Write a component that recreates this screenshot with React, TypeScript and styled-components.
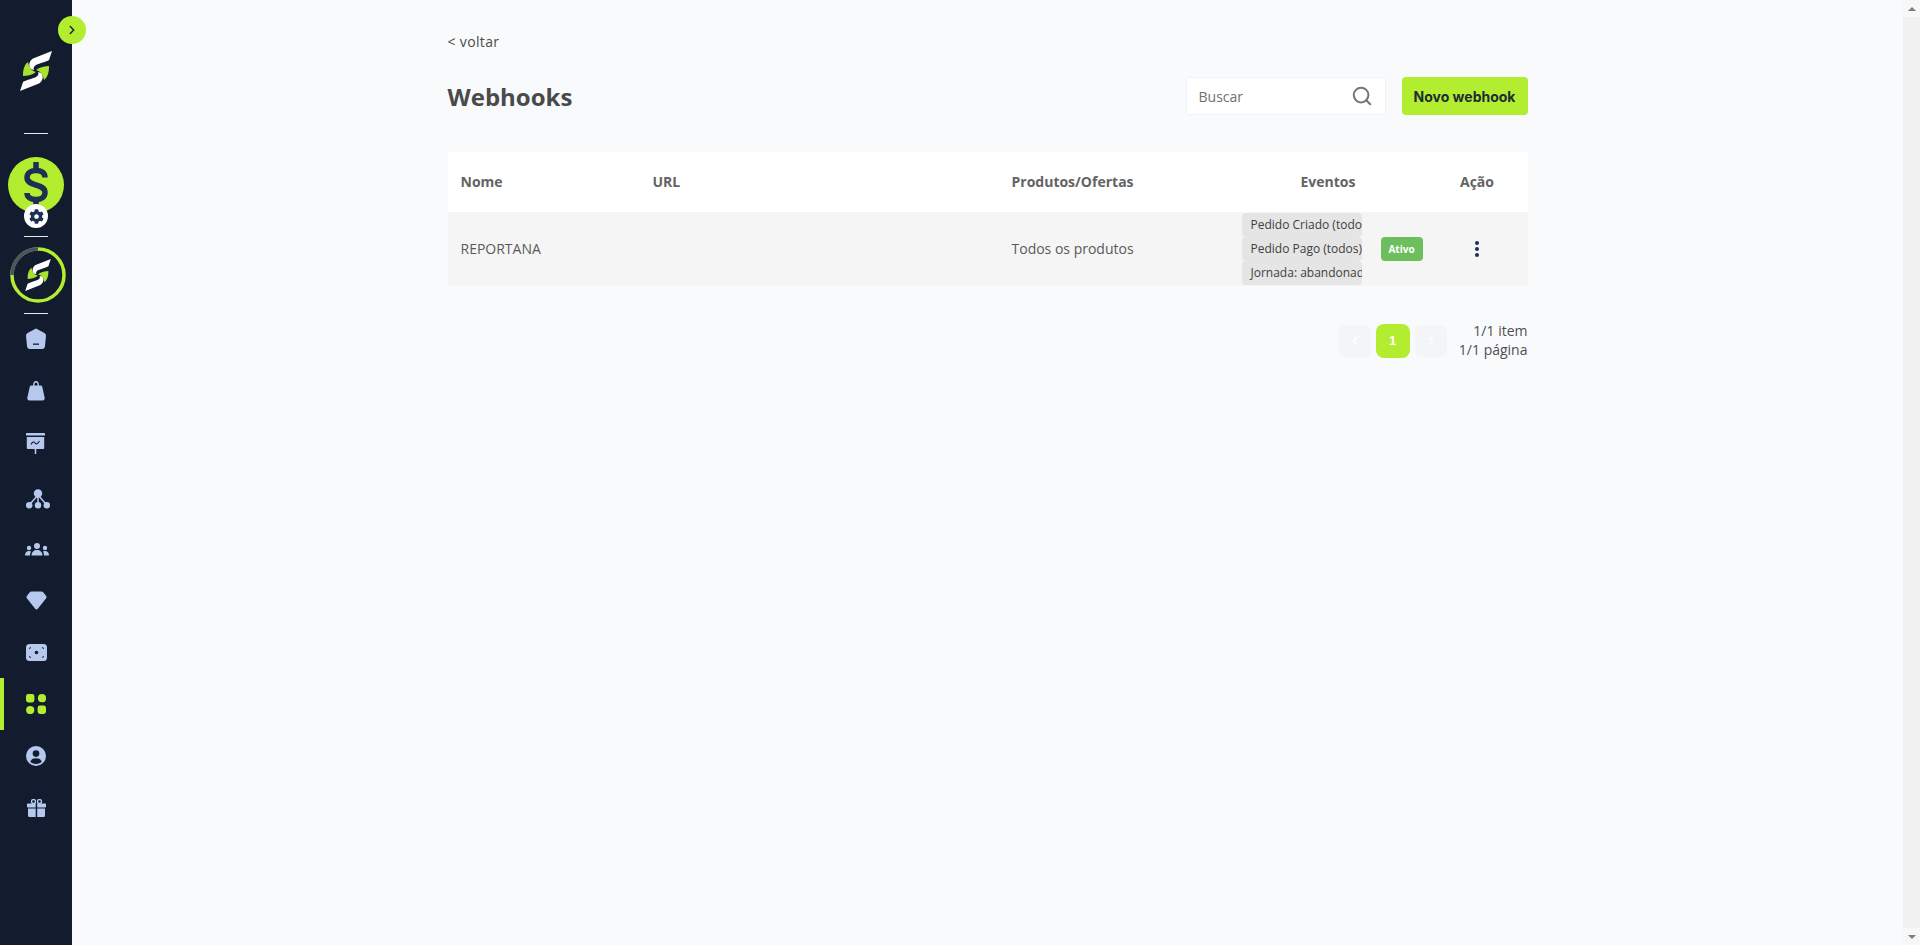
import React from "react";
import styled, { createGlobalStyle } from "styled-components";
import { ChevronLeft, ChevronRight, Search } from "lucide-react";
import { FaCog } from "react-icons/fa";

const GlobalStyle = createGlobalStyle`
  html, body {
    margin: 0;
    padding: 0;
    height: 100%;
    overflow: hidden;
    background: #f9fafc;
  }
  #root {
    height: 100%;
  }
  * {
    box-sizing: border-box;
  }
`;

const Page = styled.div`
  display: flex;
  height: 945px;
  font-family: "Open Sans", "Liberation Sans", sans-serif;
  color: #4a4a4a;
`;

const Sidebar = styled.nav`
  position: relative;
  flex: 0 0 72px;
  display: flex;
  flex-direction: column;
  align-items: center;
  padding-top: 51px;
  background: #121c2e;
`;

const Toggle = styled.button`
  position: absolute;
  top: 16px;
  right: -14px;
  z-index: 2;
  display: flex;
  align-items: center;
  justify-content: center;
  width: 28px;
  height: 28px;
  padding: 0;
  border: none;
  border-radius: 50%;
  background: #b2ee2f;
  color: #16233a;
`;

const Logo = styled.svg`
  display: block;
  flex: none;
`;

const Divider = styled.hr<{ $top: number }>`
  flex: none;
  width: 24px;
  height: 1px;
  margin: ${(p) => p.$top}px 0 0;
  border: none;
  background: #e8ebf0;
`;

const Balance = styled.div`
  position: relative;
  flex: none;
  width: 56px;
  height: 56px;
  margin-top: 23px;
  border-radius: 50%;
  background: #b2ee2f;
`;

const GearBadge = styled.span`
  position: absolute;
  left: 16px;
  top: 47px;
  display: flex;
  align-items: center;
  justify-content: center;
  width: 24px;
  height: 24px;
  border-radius: 50%;
  background: #ffffff;
  color: #1d2f52;
`;

const Ring = styled.div`
  position: relative;
  flex: none;
  display: flex;
  align-items: center;
  justify-content: center;
  width: 56px;
  height: 56px;
  margin: 10px 0 0 4px;
`;

const RingTrack = styled.svg`
  position: absolute;
  inset: 0;
`;

const NavList = styled.ul`
  flex: none;
  align-self: stretch;
  margin: 0;
  padding: 0;
  list-style: none;
`;

const NavItem = styled.li<{ $active?: boolean; $shift: number }>`
  display: flex;
  align-items: center;
  justify-content: center;
  height: 52px;
  border-left: 4px solid ${(p) => (p.$active ? "#b2ee2f" : "transparent")};
  padding-right: 4px;
  color: ${(p) => (p.$active ? "#b2ee2f" : "#b6c8ee")};

  svg {
    margin-top: ${(p) => p.$shift}px;
  }
`;

const Main = styled.main`
  flex: 1;
  display: flex;
  justify-content: center;
  min-width: 0;
  background: #f9fafc;
`;

const Content = styled.div`
  width: 1080px;
  padding-top: 32px;
`;

const BackLink = styled.a`
  display: block;
  font-size: 14px;
  line-height: 19px;
  letter-spacing: 0.35px;
  color: #4a4a4a;
`;

const TitleRow = styled.header`
  display: flex;
  align-items: center;
  height: 38px;
  margin-top: 26px;
`;

const Title = styled.h1`
  flex: 1;
  margin: 0;
  padding-top: 1px;
  font-size: 24px;
  line-height: 38px;
  font-weight: 700;
  color: #4a4a4a;
`;

const SearchBox = styled.label`
  display: flex;
  align-items: center;
  justify-content: space-between;
  width: 200px;
  height: 38px;
  padding: 0 12px 0 12px;
  border: 1px solid #f1f2f5;
  border-radius: 3px;
  background: #ffffff;
  color: #757575;
`;

const SearchInput = styled.input`
  width: 120px;
  border: none;
  outline: none;
  padding: 0;
  background: transparent;
  font-family: inherit;
  font-size: 14px;
  color: #6f6f6f;

  &::placeholder {
    color: #6f6f6f;
    opacity: 1;
  }
`;

const NewButton = styled.button`
  width: 126px;
  height: 38px;
  margin-left: 16px;
  padding: 0;
  border: none;
  border-radius: 4px;
  background: #b2ee2f;
  font-family: "Inter", "Liberation Sans", sans-serif;
  font-size: 14px;
  font-weight: 700;
  color: #1f2c33;
`;

const Table = styled.section`
  margin-top: 37px;
`;

const columns = "192px 359px 231px 144px 52px 102px";

const HeaderRow = styled.div`
  display: grid;
  grid-template-columns: ${columns};
  align-items: center;
  height: 60px;
  border-radius: 3px 3px 0 0;
  background: #ffffff;
  font-size: 14px;
  font-weight: 700;
  color: #636363;
`;

const HeaderCell = styled.div<{ $center?: boolean; $span?: number }>`
  grid-column: span ${(p) => p.$span ?? 1};
  padding: 0 12px 2px 13px;
  text-align: ${(p) => (p.$center ? "center" : "left")};
`;

const BodyRow = styled.div`
  display: grid;
  grid-template-columns: ${columns};
  align-items: center;
  height: 74px;
  background: #f5f5f5;
  font-size: 14px;
  color: #5a5a5a;
`;

const Cell = styled.div`
  padding: 0 12px 2px 13px;
`;

const EventList = styled.div`
  display: flex;
  flex-direction: column;
  width: 120px;
  margin-left: 12px;
  overflow: hidden;
`;

const EventChip = styled.span`
  display: block;
  height: 24px;
  padding: 0 0 0 9px;
  border-radius: 4px;
  background: #e5e5e5;
  font-size: 12px;
  line-height: 24px;
  white-space: nowrap;
  overflow: hidden;
  color: #404040;
`;

const StatusCell = styled.div`
  padding-left: 7px;
`;

const StatusBadge = styled.span`
  display: flex;
  align-items: center;
  justify-content: center;
  width: 42px;
  height: 24px;
  border-radius: 4px;
  background: #6dbf5d;
  font-size: 10px;
  font-weight: 700;
  color: #ffffff;
`;

const ActionCell = styled.div`
  display: flex;
  flex-direction: column;
  align-items: center;
  gap: 2px;
`;

const Dot = styled.span`
  width: 4px;
  height: 4px;
  border-radius: 50%;
  background: #1d2f52;
`;

const Footer = styled.footer`
  display: flex;
  align-items: center;
  justify-content: flex-end;
  margin-top: 35px;
`;

const PageButton = styled.span<{ $current?: boolean }>`
  display: flex;
  align-items: center;
  justify-content: center;
  width: ${(p) => (p.$current ? 34 : 32)}px;
  height: ${(p) => (p.$current ? 34 : 32)}px;
  margin-right: 5px;
  border-radius: ${(p) => (p.$current ? 8 : 6)}px;
  background: ${(p) => (p.$current ? "#b2ee2f" : "#f4f5f6")};
  font-family: "Liberation Sans", sans-serif;
  font-size: 13px;
  font-weight: 700;
  color: #ffffff;
`;

const PageInfo = styled.div`
  width: 76px;
  margin-bottom: 1px;
  font-size: 14px;
  line-height: 19px;
  text-align: right;
  color: #4f4f4f;
`;

const Scrollbar = styled.div`
  flex: 0 0 17px;
  display: flex;
  flex-direction: column;
  justify-content: space-between;
  background: #f1f1f1;
`;

const ScrollArrow = styled.span<{ $down?: boolean }>`
  display: flex;
  align-items: center;
  justify-content: center;
  height: 17px;
  background: #f7f7f7;

  &::before {
    content: "";
    border-left: 4px solid transparent;
    border-right: 4px solid transparent;
    ${(p) => (p.$down ? "border-top" : "border-bottom")}: 4px solid #7d7d7d;
  }
`;

const SLogo: React.FC<{ width: number; height: number }> = ({ width, height }) => (
  <Logo width={width} height={height} viewBox="0 0 32 40">
    <path fill="#a6e22e" d="M8 11 C4 14 3 19 3 25 C7 25 12 24 16 21 C12 20 9 17 8 11 Z" />
    <path fill="#a6e22e" d="M24 29 C28 26 29 21 29 15 C25 15 20 16 16 19 C20 20 23 23 24 29 Z" />
    <path fill="#ffffff" d="M32 0 L29 9 C26 11 20 12 16 14 C14 15 13 17 14 19 L11 18 C8 15 9 10 13 7.5 Z" />
    <path fill="#ffffff" d="M0 40 L3 31 C6 29 12 28 16 26 C18 25 19 23 18 21 L21 22 C24 25 23 30 19 32.5 Z" />
  </Logo>
);

const DollarIcon = () => (
  <svg width="56" height="56" viewBox="0 0 56 56" fill="none" stroke="#1d2f52" strokeWidth="5.5">
    <path d="M37 20.5 C37 15.5 33 13.5 28 13.5 C22 13.5 19 16.5 19 20.5 C19 25 23 26.5 28 28 C33 29.5 37 31 37 35.5 C37 40 33 42.5 28 42.5 C23 42.5 19 40.5 19 36" />
    <path d="M28 5 V13 M28 43 V51" />
  </svg>
);

const HomeIcon = () => (
  <svg width="22" height="22" viewBox="0 0 22 22" fill="currentColor">
    <path d="M11 0.5 L19.5 5 Q21 6 21 7.5 L20 18 Q19.8 21 17 21 H5 Q2.2 21 2 18 L1 7.5 Q1 6 2.5 5 Z" />
    <rect x="8" y="15.5" width="6" height="1.3" fill="#121c2e" />
  </svg>
);

const BagIcon = () => (
  <svg width="18" height="20" viewBox="0 0 18 20" fill="currentColor">
    <path d="M6 5 C6 1.2 7.5 0 9 0 C10.5 0 12 1.2 12 5 H10.6 C10.6 2.5 10 1.4 9 1.4 C8 1.4 7.4 2.5 7.4 5 Z" />
    <path d="M4.5 4.5 H13.5 C14.5 4.5 15 5 15.3 6 L17.6 16.5 C18 18.5 17 19.5 15.5 19.5 H2.5 C1 19.5 0 18.5 0.4 16.5 L2.7 6 C3 5 3.5 4.5 4.5 4.5 Z" />
  </svg>
);

const BoardIcon = () => (
  <svg width="20" height="21" viewBox="0 0 20 21" fill="currentColor">
    <rect x="0" y="0" width="19" height="2.6" rx="0.6" />
    <path d="M0.8 4 H18.2 V15 Q18.2 16 17.2 16 H10.3 V21 H8.7 V16 H1.8 Q0.8 16 0.8 15 Z" />
    <path d="M5 11.5 C6.5 8.5 8 8.5 9 10 C10 11.5 11.5 11 13.5 8" fill="none" stroke="#121c2e" strokeWidth="1.1" />
  </svg>
);

const NetworkIcon = () => (
  <svg width="24" height="20" viewBox="0 0 24 20" fill="currentColor" style={{ marginLeft: 4 }}>
    <circle cx="12" cy="4.5" r="4.2" />
    <circle cx="3.2" cy="16.2" r="3.2" />
    <circle cx="12" cy="16.2" r="3.2" />
    <circle cx="20.8" cy="16.2" r="3.2" />
    <path d="M12 6 L3.2 16 M12 6 V16 M12 6 L20.8 16" stroke="currentColor" strokeWidth="1.5" fill="none" />
  </svg>
);

const PeopleIcon = () => (
  <svg width="24" height="13" viewBox="0 0 24 13" fill="currentColor" style={{ marginLeft: 2 }}>
    <circle cx="12" cy="3" r="3" />
    <circle cx="4" cy="5" r="2.2" />
    <circle cx="20" cy="5" r="2.2" />
    <path d="M6.5 12.5 C6.5 9 9 7 12 7 C15 7 17.5 9 17.5 12.5 Z" />
    <path d="M0 12.5 C0 9.5 1.5 8 4 8 C4.8 8 5.6 8.2 6.2 8.6 C5.4 9.6 5 11 5 12.5 Z" />
    <path d="M24 12.5 C24 9.5 22.5 8 20 8 C19.2 8 18.4 8.2 17.8 8.6 C18.6 9.6 19 11 19 12.5 Z" />
  </svg>
);

const DiamondIcon = () => (
  <svg width="21" height="19" viewBox="0 0 21 19" fill="currentColor">
    <path d="M5.5 0.5 H15.5 Q16.5 0.5 17.2 1.3 L20.2 5 Q21 6.2 20.2 7.2 L11.8 17.8 Q10.5 19 9.2 17.8 L0.8 7.2 Q0 6.2 0.8 5 L3.8 1.3 Q4.5 0.5 5.5 0.5 Z" />
  </svg>
);

const CameraIcon = () => (
  <svg width="21" height="17" viewBox="0 0 21 17" fill="currentColor">
    <rect x="0" y="0" width="21" height="17" rx="3.5" />
    <g fill="none" stroke="#121c2e" strokeWidth="1">
      <path d="M3 4.5 L5 3.5" />
      <path d="M18 4.5 L16 3.5" />
      <path d="M3 12.5 L5 13.5" />
      <path d="M18 12.5 L16 13.5" />
    </g>
    <circle cx="10.5" cy="8.5" r="1.8" fill="#121c2e" />
  </svg>
);

const GridIcon = () => (
  <svg width="20" height="20" viewBox="0 0 20 20" fill="currentColor">
    <rect x="0" y="0" width="8.4" height="8.4" rx="2.4" />
    <circle cx="16" cy="4.2" r="4.1" />
    <circle cx="4.2" cy="16" r="4.1" />
    <rect x="11.6" y="11.6" width="8.4" height="8.4" rx="2.4" />
  </svg>
);

const UserIcon = () => (
  <svg width="20" height="20" viewBox="0 0 20 20" fill="currentColor">
    <circle cx="10" cy="10" r="10" />
    <circle cx="10" cy="7.6" r="3.3" fill="#121c2e" />
    <path d="M4.3 15.8 C5 13.2 7 12.2 10 12.2 C13 12.2 15 13.2 15.7 15.8 C14.2 17.2 12.2 18 10 18 C7.8 18 5.8 17.2 4.3 15.8 Z" fill="#121c2e" />
  </svg>
);

const GiftIcon = () => (
  <svg width="19" height="18" viewBox="0 0 19 18" fill="currentColor">
    <circle cx="6.5" cy="2.5" r="2" fill="none" stroke="currentColor" strokeWidth="1.3" />
    <circle cx="12.5" cy="2.5" r="2" fill="none" stroke="currentColor" strokeWidth="1.3" />
    <rect x="0" y="4.5" width="19" height="4" rx="0.8" />
    <path d="M1 9.5 H18 V16.5 Q18 18 16.5 18 H2.5 Q1 18 1 16.5 Z" />
    <rect x="8.7" y="4.5" width="1.5" height="13.5" fill="#121c2e" />
  </svg>
);

// shift = margin above the icon, the icons in the menu aren't evenly spaced
const navIcons = [
  { icon: <HomeIcon />, shift: -2 },
  { icon: <BagIcon />, shift: -2 },
  { icon: <BoardIcon />, shift: -2 },
  { icon: <NetworkIcon />, shift: 6 },
  { icon: <PeopleIcon />, shift: 3 },
  { icon: <DiamondIcon />, shift: 0 },
  { icon: <CameraIcon />, shift: 0 },
  { icon: <GridIcon />, shift: 0 },
  { icon: <UserIcon />, shift: 0 },
  { icon: <GiftIcon />, shift: 0 },
];

const events = ["Pedido Criado (todos)", "Pedido Pago (todos)", "Jornada: abandonada"];

const App: React.FC = () => {
  return (
    <Page>
      <GlobalStyle />
      <Sidebar>
        <Toggle aria-label="Abrir menu">
          <ChevronRight size={14} strokeWidth={2.5} />
        </Toggle>
        <SLogo width={32} height={40} />
        <Divider $top={42} />
        <Balance>
          <DollarIcon />
          <GearBadge>
            <FaCog size={15} />
          </GearBadge>
        </Balance>
        <Divider $top={23} />
        <Ring>
          <RingTrack width={56} height={56} viewBox="0 0 56 56">
            <circle cx="28" cy="28" r="26" fill="none" stroke="#b2ee2f" strokeWidth="3.5" />
            <path d="M2 28 A26 26 0 0 1 28 2" fill="none" stroke="#4b5262" strokeWidth="3.5" />
          </RingTrack>
          <SLogo width={26} height={32} />
        </Ring>
        <Divider $top={10} />
        <NavList>
          {navIcons.map((item, i) => (
            <NavItem key={i} $active={i === 7} $shift={item.shift}>
              {item.icon}
            </NavItem>
          ))}
        </NavList>
      </Sidebar>
      <Main>
        <Content>
          <BackLink>&lt; voltar</BackLink>
          <TitleRow>
            <Title>Webhooks</Title>
            <SearchBox>
              <SearchInput placeholder="Buscar" />
              <Search size={22} strokeWidth={2.2} />
            </SearchBox>
            <NewButton>Novo webhook</NewButton>
          </TitleRow>
          <Table>
            <HeaderRow>
              <HeaderCell>Nome</HeaderCell>
              <HeaderCell>URL</HeaderCell>
              <HeaderCell>Produtos/Ofertas</HeaderCell>
              <HeaderCell $center $span={2}>
                Eventos
              </HeaderCell>
              <HeaderCell $center>Ação</HeaderCell>
            </HeaderRow>
            <BodyRow>
              <Cell>REPORTANA</Cell>
              <Cell />
              <Cell>Todos os produtos</Cell>
              <EventList>
                {events.map((name) => (
                  <EventChip key={name}>{name}</EventChip>
                ))}
              </EventList>
              <StatusCell>
                <StatusBadge>Ativo</StatusBadge>
              </StatusCell>
              <ActionCell>
                <Dot />
                <Dot />
                <Dot />
              </ActionCell>
            </BodyRow>
          </Table>
          <Footer>
            <PageButton>
              <ChevronLeft size={14} strokeWidth={2.5} />
            </PageButton>
            <PageButton $current>1</PageButton>
            <PageButton>
              <ChevronRight size={14} strokeWidth={2.5} />
            </PageButton>
            <PageInfo>
              1/1 item
              <br />
              1/1 página
            </PageInfo>
          </Footer>
        </Content>
      </Main>
      <Scrollbar>
        <ScrollArrow />
        <ScrollArrow $down />
      </Scrollbar>
    </Page>
  );
};

export default App;
